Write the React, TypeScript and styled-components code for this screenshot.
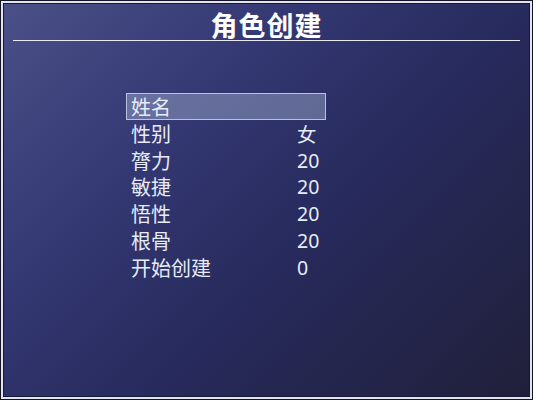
import React from "react";
import styled, { createGlobalStyle } from "styled-components";

const Global = createGlobalStyle`
  html, body { margin: 0; padding: 0; background: #0c0c18; }
  #root { width: 533px; height: 400px; }
`;

const Frame = styled.div`
  box-sizing: border-box;
  width: 533px;
  height: 400px;
  border: 1px solid #15152a;
  padding: 2px;
  background: #e4e4ec;
`;

const Window = styled.div`
  box-sizing: border-box;
  width: 100%;
  height: 100%;
  border: 1px solid #151838;
  background: linear-gradient(135deg, #4b5088 0%, #353974 30%, #272a5c 58%, #20203a 100%);
  display: flex;
  flex-direction: column;
  font-family: "Noto Sans CJK SC", "Noto Sans", sans-serif;
  color: #eef2fa;
`;

const TitleBar = styled.div`
  margin: 0 9px 0 9px;
  height: 36px;
  border-bottom: 1px solid #e8e8f0;
  display: flex;
  justify-content: center;
  align-items: flex-end;
`;

const Title = styled.h1`
  margin: 0;
  font-size: 27px;
  font-weight: 700;
  line-height: 30px;
  letter-spacing: 1px;
  color: #ffffff;
`;

const Menu = styled.div`
  margin: 52px 0 0 122px;
  width: 200px;
  display: flex;
  flex-direction: column;
`;

const Row = styled.div<{ $selected?: boolean }>`
  box-sizing: border-box;
  height: 26.8px;
  display: flex;
  align-items: center;
  padding-left: 4px;
  font-size: 20px;
  color: #e6ecf8;
  border: 1px solid ${(p) => (p.$selected ? "rgba(200,210,230,0.85)" : "transparent")};
  background: ${(p) => (p.$selected ? "rgba(170,185,215,0.42)" : "transparent")};
`;

const Label = styled.span`
  width: 166px;
`;

const Value = styled.span`
  font-family: "Noto Sans", "Noto Sans CJK SC", sans-serif;
  font-size: 19.5px;
`;

const rows: { label: string; value?: string }[] = [
  { label: "姓名" },
  { label: "性别", value: "女" },
  { label: "膂力", value: "20" },
  { label: "敏捷", value: "20" },
  { label: "悟性", value: "20" },
  { label: "根骨", value: "20" },
  { label: "开始创建", value: "0" },
];

export default function App() {
  return (
    <>
      <Global />
      <Frame>
        <Window>
          <TitleBar>
            <Title>角色创建</Title>
          </TitleBar>
          <Menu>
            {rows.map((r, i) => (
              <Row key={r.label} $selected={i === 0}>
                <Label>{r.label}</Label>
                {r.value && <Value>{r.value}</Value>}
              </Row>
            ))}
          </Menu>
        </Window>
      </Frame>
    </>
  );
}
